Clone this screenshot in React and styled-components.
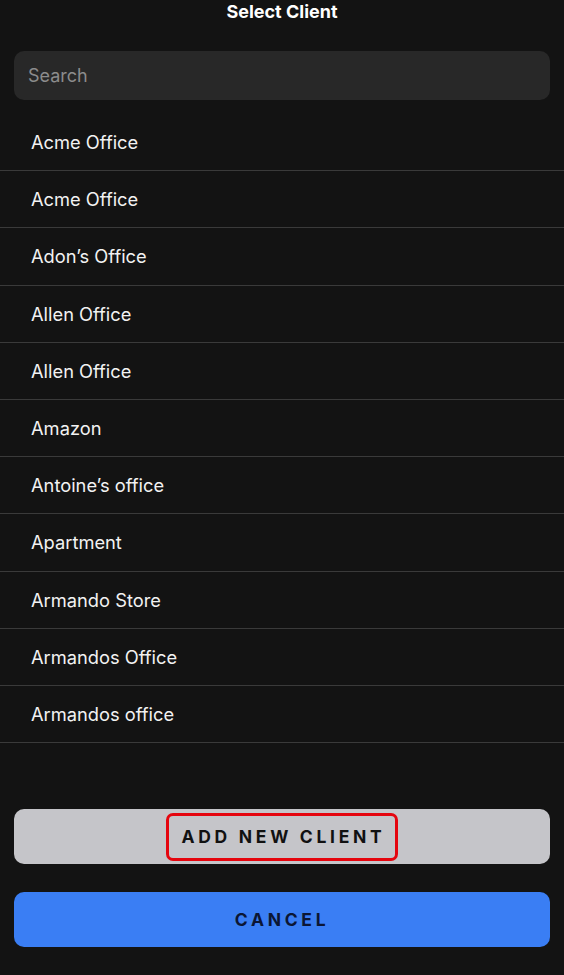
import React from 'react';
import styled, { createGlobalStyle } from 'styled-components';

const GlobalStyle = createGlobalStyle`
  html, body {
    margin: 0;
    padding: 0;
    background: #131313;
  }
  * {
    box-sizing: border-box;
  }
`;

const Screen = styled.div`
  width: 564px;
  height: 975px;
  background: #131313;
  display: flex;
  flex-direction: column;
  font-family: Inter, "Noto Sans", sans-serif;
  overflow: hidden;
`;

const Title = styled.h1`
  margin: 0;
  padding-top: 1px;
  height: 24px;
  text-align: center;
  font-size: 18px;
  font-weight: 700;
  color: #ffffff;
  line-height: 22px;
`;

const SearchBox = styled.input`
  margin: 27px 14px 0;
  height: 49px;
  border: none;
  outline: none;
  border-radius: 10px;
  background: #282828;
  padding: 0 14px;
  font-family: inherit;
  font-size: 18px;
  color: #eee;

  &::placeholder {
    color: #8c8c8c;
  }
`;

const List = styled.ul`
  list-style: none;
  margin: 14px 0 0;
  padding: 0;
`;

const Row = styled.li`
  height: 57.2px;
  display: flex;
  align-items: center;
  padding: 0 31px;
  border-bottom: 1.5px solid #3a3a3a;
  font-size: 18.3px;
  color: #f2f2f2;
`;

const Actions = styled.div`
  margin-top: auto;
  padding: 0 14px 28px;
  display: flex;
  flex-direction: column;
  gap: 28px;
`;

const ActionButton = styled.button`
  height: 55px;
  border: none;
  border-radius: 10px;
  background: ${({ variant }) => (variant === 'primary' ? '#3a7ef4' : '#c5c5c9')};
  color: ${({ variant }) => (variant === 'primary' ? '#0b1634' : '#111')};
  font-family: inherit;
  font-size: 17.5px;
  font-weight: 700;
  letter-spacing: 3.7px;
  display: flex;
  align-items: center;
  justify-content: center;
  cursor: pointer;
`;

const Highlight = styled.span`
  display: inline-flex;
  align-items: center;
  justify-content: center;
  height: 48px;
  padding: 0 10px 0 13px;
  border: 3.5px solid #e5050e;
  border-radius: 7px;
`;

const clients = [
  'Acme Office',
  'Acme Office',
  'Adon’s Office',
  'Allen Office',
  'Allen Office',
  'Amazon',
  'Antoine’s office',
  'Apartment',
  'Armando Store',
  'Armandos Office',
  'Armandos office',
];

export default function App() {
  return (
    <>
      <GlobalStyle />
      <Screen>
        <Title>Select Client</Title>
        <SearchBox placeholder="Search" />
        <List>
          {clients.map((name, i) => (
            <Row key={i}>{name}</Row>
          ))}
        </List>
        <Actions>
          <ActionButton>
            <Highlight>ADD NEW CLIENT</Highlight>
          </ActionButton>
          <ActionButton variant="primary">CANCEL</ActionButton>
        </Actions>
      </Screen>
    </>
  );
}
